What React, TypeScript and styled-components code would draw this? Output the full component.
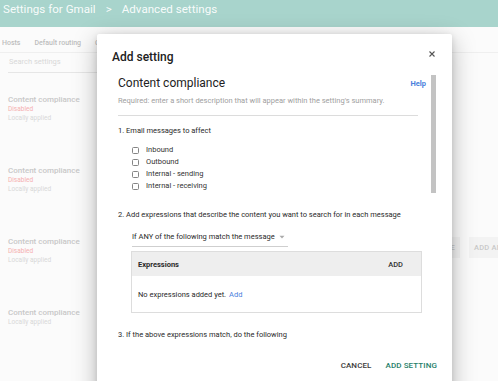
import React from "react";
import styled, { createGlobalStyle } from "styled-components";

const Global = createGlobalStyle`
  html, body { margin: 0; padding: 0; }
  body {
    width: 498px;
    height: 381px;
    overflow: hidden;
    background: #fbfbfb;
    font-family: Roboto, "Liberation Sans", Arial, sans-serif;
    -webkit-font-smoothing: antialiased;
  }
`;

const Page = styled.div`
  position: relative;
  width: 540px;
  height: 381px;
  background: #fbfbfb;
`;

const TopBar = styled.header`
  height: 27px;
  background: #a8d4cc;
  padding: 0 0 0 3px;
  box-sizing: border-box;
  color: rgba(255, 255, 255, 0.93);
  font-size: 11.6px;
  line-height: 19px;
  display: flex;
  gap: 10px;
`;

const Tabs = styled.nav`
  display: flex;
  gap: 14px;
  padding: 12px 0 5px 2px;
  border-bottom: 1px solid #efefef;
  font-size: 7px;
  line-height: 8px;
  font-weight: 500;
  color: #bdbdbd;
`;

const Search = styled.div`
  margin-left: 8px;
  width: 250px;
  padding: 5px 0 6px 1px;
  border-bottom: 1px solid #e6e6e6;
  font-size: 7.5px;
  line-height: 8px;
  color: #d8d8d8;
`;

const List = styled.div`
  display: flex;
  flex-direction: column;
`;

const Item = styled.div`
  height: 71px;
  box-sizing: border-box;
  padding: 22px 8px 0 8px;
  display: flex;
  align-items: flex-start;
`;

const ItemText = styled.div`
  display: flex;
  flex-direction: column;
`;

const ItemTitle = styled.div`
  font-size: 8px;
  line-height: 10px;
  font-weight: 500;
  color: #c8c8c8;
`;

const ItemMeta = styled.div<{ $warn?: boolean }>`
  font-size: 6.5px;
  line-height: 9px;
  color: ${(p) => (p.$warn ? "#f5b0b0" : "#d8d8d8")};
`;

const ItemActions = styled.div`
  margin-left: auto;
  display: flex;
  gap: 9px;
`;

const GhostButton = styled.div`
  height: 21px;
  padding: 0 5px;
  background: #f3f3f3;
  color: #c9c9c9;
  font-size: 7.5px;
  font-weight: 500;
  line-height: 21px;
  letter-spacing: 0.2px;
`;

const Dialog = styled.section`
  position: absolute;
  left: 97px;
  top: 34px;
  width: 355px;
  height: 380px;
  background: #fff;
  border-radius: 2px;
  box-shadow: 0 6px 24px rgba(0, 0, 0, 0.28), 0 2px 6px rgba(0, 0, 0, 0.12);
  display: flex;
  flex-direction: column;
`;

const DialogHeader = styled.div`
  display: flex;
  justify-content: space-between;
  align-items: flex-start;
  padding: 13px 15px 0 15px;
`;

const DialogTitle = styled.h2`
  margin: 0;
  font-size: 12px;
  line-height: 20px;
  font-weight: 500;
  color: #212121;
`;

const Close = styled.button`
  margin-top: 2px;
  width: 10px;
  height: 10px;
  padding: 0;
  border: 0;
  background: none;
  display: flex;
  align-items: center;
  justify-content: center;
`;

const Body = styled.div`
  margin-top: 5px;
  height: 280px;
  overflow: hidden;
  display: flex;
  padding: 0 16px 0 21px;
`;

const Content = styled.div`
  flex: 1;
  display: flex;
  flex-direction: column;
  color: #2a2a2a;
  font-size: 7.5px;
`;

const Scrollbar = styled.div`
  width: 5px;
  margin-left: 5px;
  flex-shrink: 0;
`;

const Thumb = styled.div`
  margin-top: 3px;
  height: 118px;
  background: #c3c3c3;
`;

const TitleRow = styled.div`
  display: flex;
  justify-content: space-between;
  align-items: center;
  height: 22px;
`;

const SectionTitle = styled.div`
  font-size: 12px;
  color: #222;
`;

const Help = styled.a`
  font-size: 7.5px;
  font-weight: 700;
  color: #4a80dc;
  text-decoration: none;
`;

const Desc = styled.div`
  margin-top: 1px;
  line-height: 12px;
  color: #a0a0a0;
`;

const Divider = styled.hr`
  margin: 8px 8px 0 0;
  border: 0;
  height: 1px;
  background: #dcdcdc;
`;

const Heading = styled.div<{ $gap: number }>`
  margin-top: ${(p) => p.$gap}px;
  line-height: 12px;
  color: #2a2a2a;
`;

const CheckList = styled.div`
  margin-top: 7px;
  padding-left: 14px;
  display: flex;
  flex-direction: column;
`;

const CheckRow = styled.label`
  display: flex;
  align-items: center;
  gap: 7px;
  height: 12px;
  line-height: 12px;
  color: #333;
`;

const Box = styled.span`
  width: 7px;
  height: 7px;
  box-sizing: border-box;
  border: 1px solid #858585;
  border-radius: 1.5px;
`;

const Select = styled.div`
  margin: 10px 0 0 14px;
  width: 156px;
  padding-bottom: 3px;
  border-bottom: 1px solid #cfcfcf;
  line-height: 12px;
  display: flex;
  align-items: center;
  gap: 4px;
  color: #2a2a2a;
`;

const Table = styled.div`
  margin: 4px 4px 0 13px;
  border: 1px solid #dddddd;
  display: flex;
  flex-direction: column;
`;

const TableHead = styled.div`
  height: 24px;
  background: #eeeeee;
  display: flex;
  align-items: center;
  justify-content: space-between;
  padding: 0 18px 0 6px;
  font-weight: 700;
  color: #2a2a2a;
`;

const HeadAction = styled.span`
  font-weight: 500;
  color: #333;
`;

const TableBody = styled.div`
  height: 36px;
  display: flex;
  align-items: center;
  padding-left: 6px;
  gap: 3px;
  color: #2a2a2a;
`;

const InlineLink = styled.a`
  color: #4a80dc;
  text-decoration: none;
`;

const Footer = styled.div`
  display: flex;
  justify-content: flex-end;
  gap: 14px;
  padding: 8px 15px 0 0;
`;

const FooterButton = styled.button<{ $primary?: boolean }>`
  border: 0;
  background: none;
  padding: 0;
  font-family: inherit;
  font-size: 8px;
  line-height: 12px;
  font-weight: 500;
  letter-spacing: 0.1px;
  color: ${(p) => (p.$primary ? "#25806a" : "#3c3c3c")};
`;

const items = [
  { disabled: true, actions: false },
  { disabled: true, actions: false },
  { disabled: true, actions: true },
  { disabled: false, actions: false },
];

const options = ["Inbound", "Outbound", "Internal - sending", "Internal - receiving"];

export default function App() {
  return (
    <>
      <Global />
      <Page>
        <TopBar>
          <span>Settings for Gmail</span>
          <span>&gt;</span>
          <span>Advanced settings</span>
        </TopBar>
        <Tabs>
          <span>Hosts</span>
          <span>Default routing</span>
          <span>Compliance</span>
        </Tabs>
        <Search>Search settings</Search>
        <List>
          {items.map((it, i) => (
            <Item key={i}>
              <ItemText>
                <ItemTitle>Content compliance</ItemTitle>
                {it.disabled && <ItemMeta $warn>Disabled</ItemMeta>}
                <ItemMeta>Locally applied</ItemMeta>
              </ItemText>
              {it.actions && (
                <ItemActions>
                  <GhostButton>DELETE</GhostButton>
                  <GhostButton>ADD ANOTHER</GhostButton>
                </ItemActions>
              )}
            </Item>
          ))}
        </List>

        <Dialog>
          <DialogHeader>
            <DialogTitle>Add setting</DialogTitle>
            <Close aria-label="Close">
              <svg width="6" height="6" viewBox="0 0 6 6">
                <path d="M0.5 0.5 L5.5 5.5 M5.5 0.5 L0.5 5.5" stroke="#555" strokeWidth="1.1" />
              </svg>
            </Close>
          </DialogHeader>
          <Body>
            <Content>
              <TitleRow>
                <SectionTitle>Content compliance</SectionTitle>
                <Help href="#">Help</Help>
              </TitleRow>
              <Desc>Required: enter a short description that will appear within the setting's summary.</Desc>
              <Divider />
              <Heading $gap={9}>1. Email messages to affect</Heading>
              <CheckList>
                {options.map((o) => (
                  <CheckRow key={o}>
                    <Box />
                    {o}
                  </CheckRow>
                ))}
              </CheckList>
              <Heading $gap={17}>
                2. Add expressions that describe the content you want to search for in each message
              </Heading>
              <Select>
                If ANY of the following match the message
                <svg width="6" height="4" viewBox="0 0 6 4">
                  <path d="M0.5 0.8 L5.5 0.8 L3 3.4 Z" fill="#aaa" />
                </svg>
              </Select>
              <Table>
                <TableHead>
                  <span>Expressions</span>
                  <HeadAction>ADD</HeadAction>
                </TableHead>
                <TableBody>
                  No expressions added yet.
                  <InlineLink href="#">Add</InlineLink>
                </TableBody>
              </Table>
              <Heading $gap={16}>3. If the above expressions match, do the following</Heading>
            </Content>
            <Scrollbar>
              <Thumb />
            </Scrollbar>
          </Body>
          <Footer>
            <FooterButton>CANCEL</FooterButton>
            <FooterButton $primary>ADD SETTING</FooterButton>
          </Footer>
        </Dialog>
      </Page>
    </>
  );
}
